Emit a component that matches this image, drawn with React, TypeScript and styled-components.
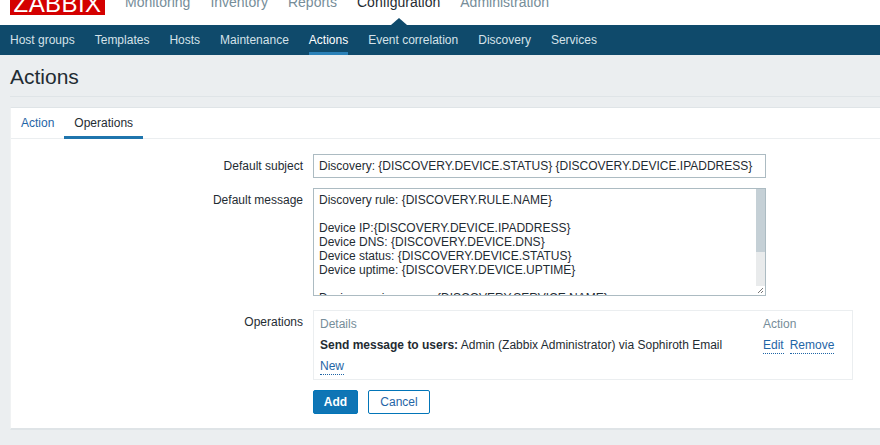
import React from "react";
import styled, { createGlobalStyle } from "styled-components";

const Global = createGlobalStyle`
  html, body { margin: 0; padding: 0; background: #ebeef0; overflow: hidden; }
  body { font-family: "Liberation Sans", Arial, sans-serif; font-size: 12px; color: #1f2c33; }
`;
const Page = styled.div`
  width: 880px; height: 445px; overflow: hidden; background: #ebeef0;
`;
const TopBar = styled.header`
  height: 25px; background: #fff; display: flex; align-items: flex-start; padding-left: 10px; overflow: hidden;
`;
const Logo = styled.div`
  width: 95px; height: 15px; background: #d40000; color: #fff; overflow: hidden; flex: none;
  font-size: 24px; letter-spacing: 0.4px; text-align: center;
  span { display: block; margin-top: -9px; line-height: 26px; }
`;
const TopNav = styled.nav`
  display: flex; gap: 20px; margin-left: 20px; margin-top: -7px; font-size: 14px; line-height: 18px;
`;
const TopItem = styled.span<{ $active?: boolean }>`
  color: ${(p) => (p.$active ? "#1f2c33" : "#768d99")};
  position: relative;
`;
const Notch = styled.i`
  position: absolute; left: 50%; margin-left: -8px; top: 25px; width: 0; height: 0;
  border-left: 8px solid transparent; border-right: 8px solid transparent; border-bottom: 7px solid #0f4a6b;
`;
const SubBar = styled.nav`
  height: 30px; background: #0f4a6b; display: flex; padding-left: 10px; gap: 20px;
`;
const SubItem = styled.span<{ $active?: boolean }>`
  line-height: 30px; height: 30px; box-sizing: border-box; color: ${(p) => (p.$active ? "#fff" : "#d5e2e9")};
  border-bottom: 3px solid ${(p) => (p.$active ? "#2b81b8" : "transparent")};
`;
const TitleRow = styled.div`
  height: 42px; box-sizing: border-box; padding-top: 3px; margin-left: 10px; border-bottom: 1px solid #dfe4e7; display: flex; align-items: center;
`;
const Title = styled.h1`
  margin: 0; font-size: 21px; font-weight: 400; color: #1f2c33; line-height: 38px;
`;
const Panel = styled.main`
  margin: 10px 0 0 10px; height: 323px; background: #fff; border-top: 1px solid #dfe4e7; border-left: 1px solid #f0f2f3;
  border-bottom: 2px solid #dfe4e7; box-sizing: border-box;
`;
const Tabs = styled.div`
  height: 31px; box-sizing: border-box; border-bottom: 1px solid #ebeef0; display: flex;
`;
const Tab = styled.span<{ $active?: boolean }>`
  padding: 0 10px; height: 31px; box-sizing: border-box; line-height: 30px;
  color: ${(p) => (p.$active ? "#1f2c33" : "#1f65a6")};
  border-bottom: ${(p) => (p.$active ? "3px solid #1f75ad" : "none")};
`;
const Form = styled.div`
  display: grid; grid-template-columns: 292px 1fr; column-gap: 10px; padding-top: 15px;
`;
const Label = styled.label`
  text-align: right; padding-top: 5px; line-height: 14px; color: #1f2c33;
`;
const Field = styled.div<{ $mb?: number }>`
  margin-bottom: ${(p) => p.$mb ?? 10}px;
`;
const Input = styled.div`
  width: 453px; height: 24px; box-sizing: border-box; border: 1px solid #acbbc2; padding: 0 5px; line-height: 22px; color: #1f2c33; white-space: nowrap;
`;
const TextBox = styled.div`
  width: 453px; height: 108px; box-sizing: border-box; border: 1px solid #acbbc2; display: flex; overflow: hidden; position: relative;
`;
const TextLines = styled.div`
  flex: 1; padding: 4px 5px; line-height: 14px; white-space: pre; overflow: hidden; color: #1f2c33;
`;
const ScrollBar = styled.div`
  width: 9px; flex: none; display: flex; flex-direction: column;
`;
const Thumb = styled.div`
  height: 63px; background: #c5d0d6;
`;
const Track = styled.div`
  height: 34px; background: #e9ebec;
`;
const Grip = styled.svg`
  position: absolute; right: 1px; bottom: 1px; width: 8px; height: 8px;
`;
const OpsBox = styled.div`
  width: 540px; height: 70px; box-sizing: border-box; border: 1px solid #ebeef0; padding: 6px 6px 0;
  display: grid; grid-template-columns: 443px 1fr; grid-template-rows: 14px 14px 14px; row-gap: 7px;
`;
const Head = styled.span`
  color: #768d99; line-height: 14px;
`;
const Cell = styled.span`
  line-height: 14px; white-space: nowrap; color: #1f2c33;
  b { font-weight: 700; }
`;
const LinkCell = styled.span`
  display: flex; gap: 6px; line-height: 14px;
`;
const Dotted = styled.a`
  color: #1f65a6; border-bottom: 1px dotted #1f65a6; box-sizing: border-box; line-height: 14px;
  height: 16px; align-self: flex-start;
`;
const Buttons = styled.div`
  display: flex; gap: 10px;
`;
const Button = styled.button<{ $primary?: boolean }>`
  height: 24px; box-sizing: border-box; padding: 0; border-radius: 2px; font: inherit; font-size: 12px; cursor: pointer;
  width: ${(p) => (p.$primary ? 45 : 62)}px;
  border: 1px solid #0275b8;
  background: ${(p) => (p.$primary ? "#0f75b5" : "#fff")};
  color: ${(p) => (p.$primary ? "#fff" : "#1f65a6")};
  font-weight: ${(p) => (p.$primary ? 700 : 400)};
`;

const message = `Discovery rule: {DISCOVERY.RULE.NAME}

Device IP:{DISCOVERY.DEVICE.IPADDRESS}
Device DNS: {DISCOVERY.DEVICE.DNS}
Device status: {DISCOVERY.DEVICE.STATUS}
Device uptime: {DISCOVERY.DEVICE.UPTIME}

Device service name: {DISCOVERY.SERVICE.NAME}`;

export default function App() {
  return (
    <Page>
      <Global />
      <TopBar>
        <Logo><span>ZABBIX</span></Logo>
        <TopNav>
          <TopItem>Monitoring</TopItem>
          <TopItem>Inventory</TopItem>
          <TopItem>Reports</TopItem>
          <TopItem $active>Configuration<Notch /></TopItem>
          <TopItem>Administration</TopItem>
        </TopNav>
      </TopBar>
      <SubBar>
        <SubItem>Host groups</SubItem>
        <SubItem>Templates</SubItem>
        <SubItem>Hosts</SubItem>
        <SubItem>Maintenance</SubItem>
        <SubItem $active>Actions</SubItem>
        <SubItem>Event correlation</SubItem>
        <SubItem>Discovery</SubItem>
        <SubItem>Services</SubItem>
      </SubBar>
      <TitleRow><Title>Actions</Title></TitleRow>
      <Panel>
        <Tabs>
          <Tab>Action</Tab>
          <Tab $active>Operations</Tab>
        </Tabs>
        <Form>
          <Label>Default subject</Label>
          <Field><Input>Discovery: {"{DISCOVERY.DEVICE.STATUS}"} {"{DISCOVERY.DEVICE.IPADDRESS}"}</Input></Field>
          <Label>Default message</Label>
          <Field $mb={14}>
            <TextBox>
              <TextLines>{message}</TextLines>
              <ScrollBar><Thumb /><Track /></ScrollBar>
              <Grip viewBox="0 0 8 8"><path d="M7 2 2 7M7 5 5 7" stroke="#777" strokeWidth="1" fill="none" /></Grip>
            </TextBox>
          </Field>
          <Label>Operations</Label>
          <Field>
            <OpsBox>
              <Head>Details</Head>
              <Head>Action</Head>
              <Cell><b>Send message to users:</b> Admin (Zabbix Administrator) via Sophiroth Email</Cell>
              <LinkCell><Dotted>Edit</Dotted><Dotted>Remove</Dotted></LinkCell>
              <LinkCell><Dotted>New</Dotted></LinkCell>
            </OpsBox>
          </Field>
          <span />
          <Buttons>
            <Button $primary>Add</Button>
            <Button>Cancel</Button>
          </Buttons>
        </Form>
      </Panel>
    </Page>
  );
}
